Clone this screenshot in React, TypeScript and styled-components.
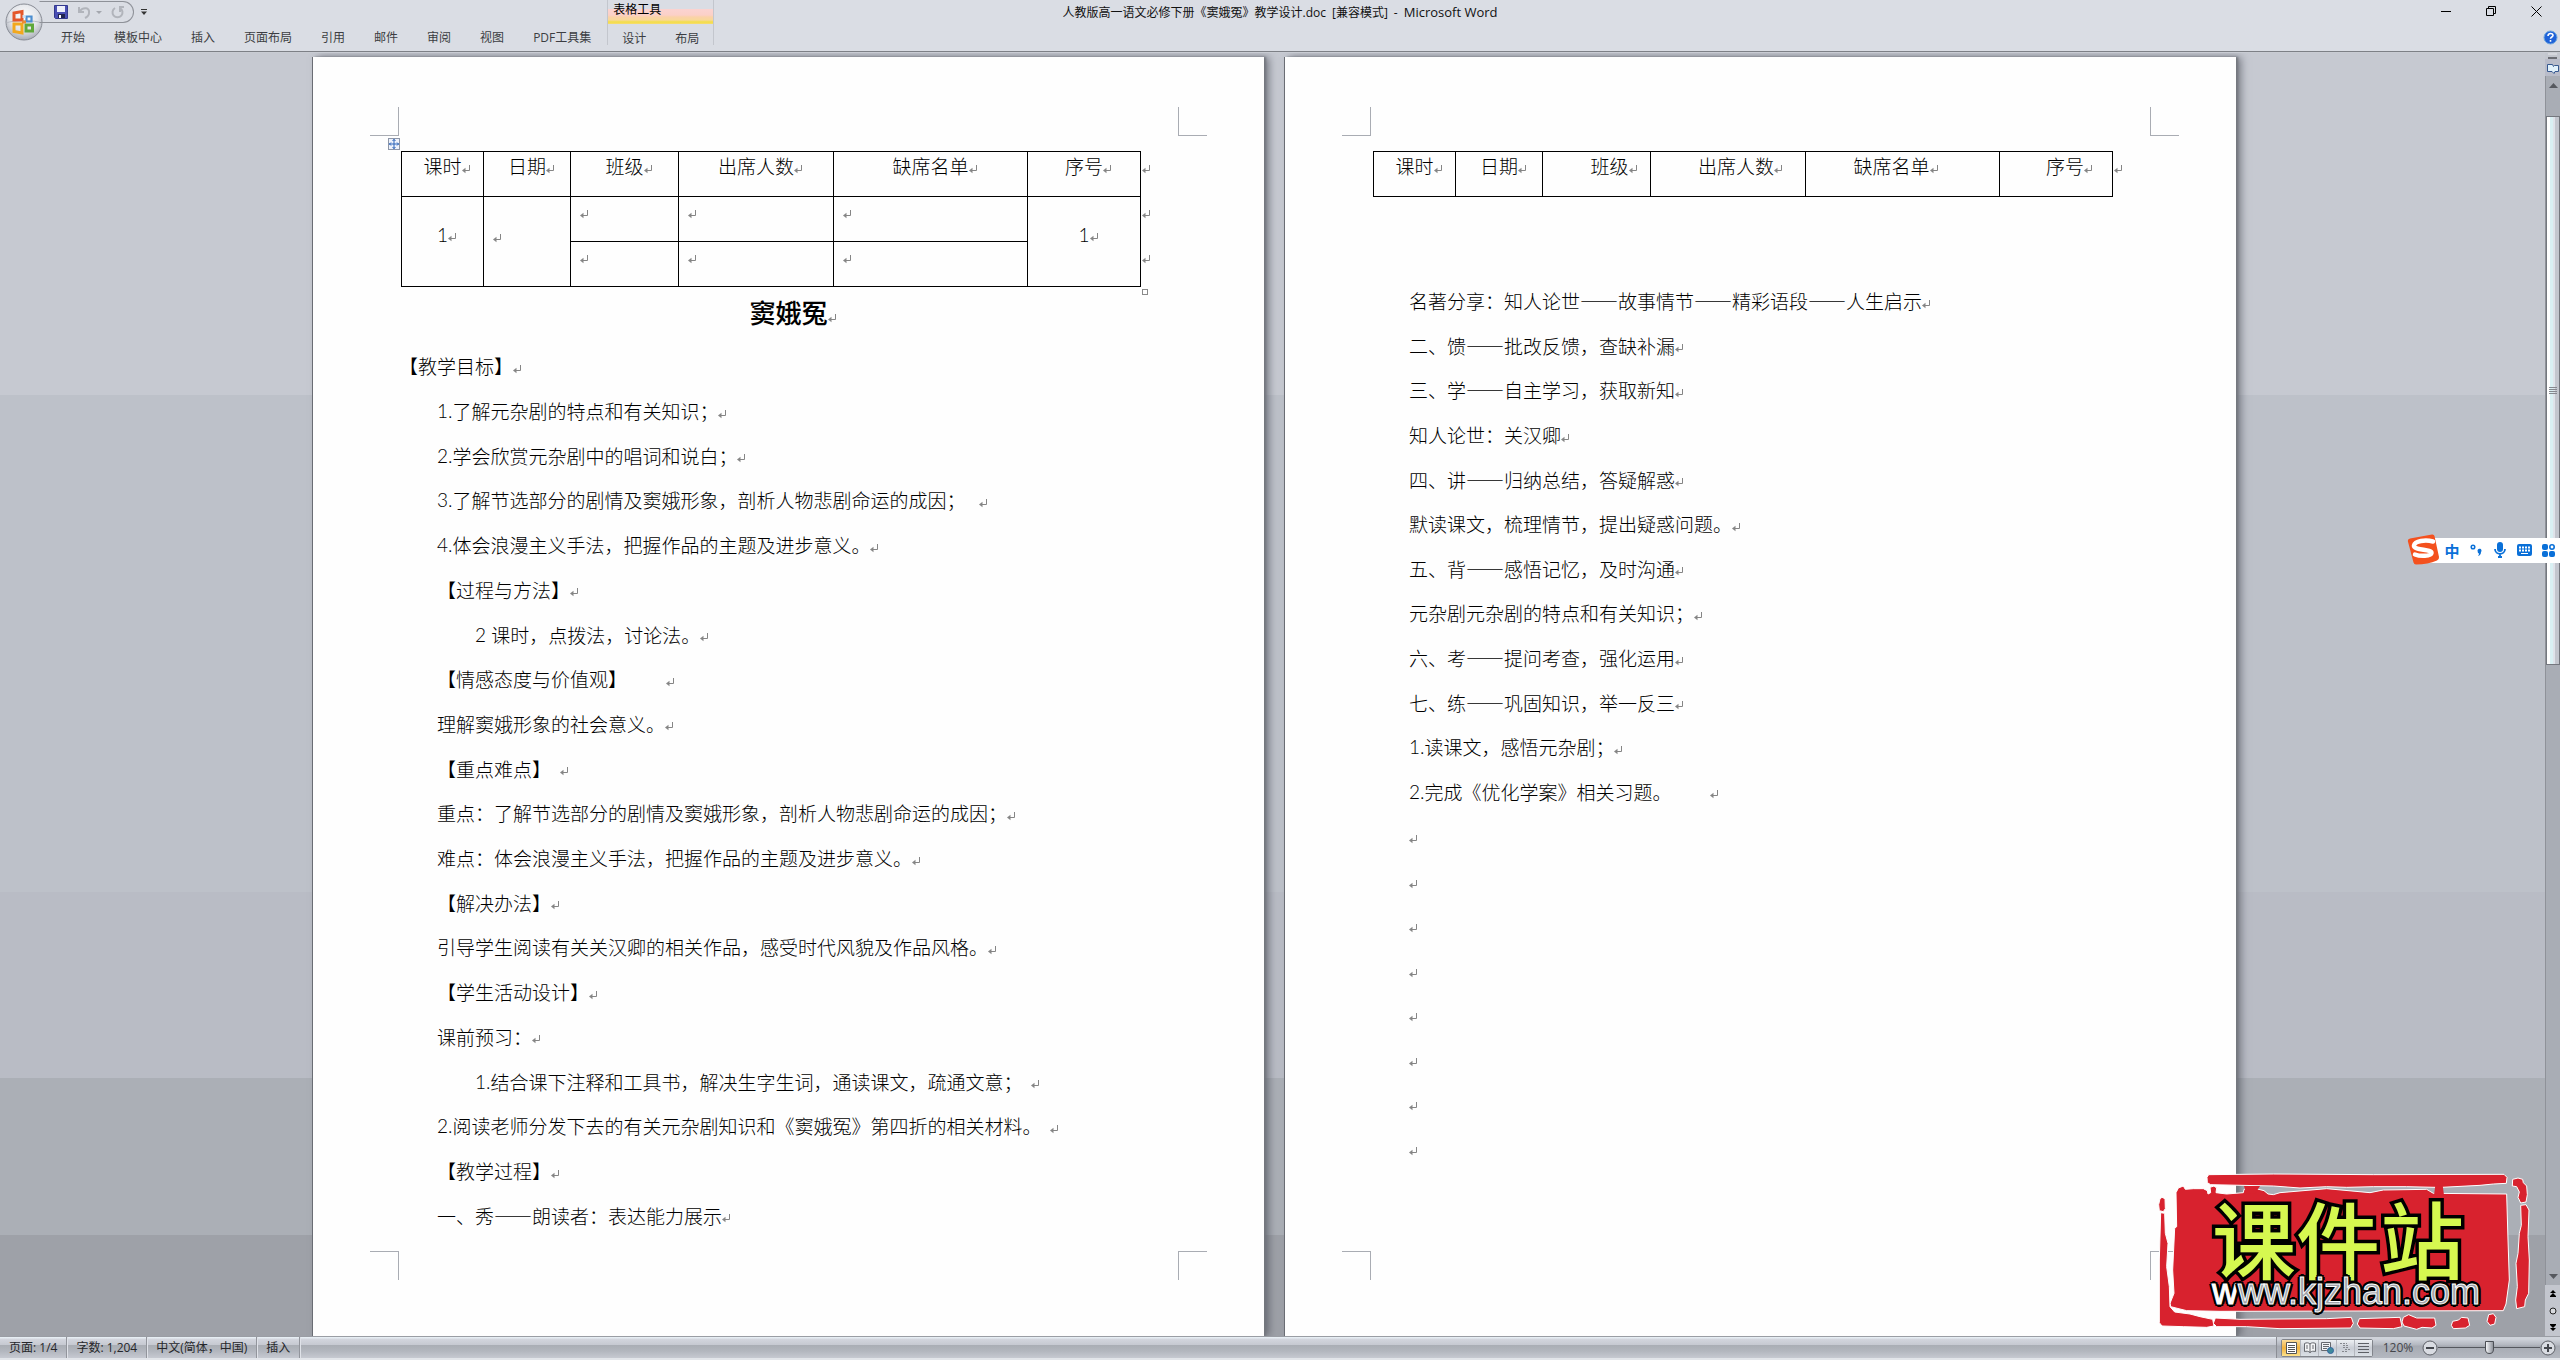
import React from "react";
import styled, { createGlobalStyle } from "styled-components";

/* ---------- shared values ---------- */

const UI_FONT = `"Open Sans", "Noto Sans CJK SC", sans-serif`;
const DOC_FONT = `"Noto Sans CJK SC", "Liberation Sans", sans-serif`;

const GlobalStyle = createGlobalStyle`
  html, body { margin: 0; padding: 0; }
  *, *::before, *::after { box-sizing: border-box; }
  button { font: inherit; color: inherit; border: 0; padding: 0; background: none; }
`;

const Shell = styled.div`
  position: relative;
  display: flex;
  flex-direction: column;
  min-height: 100vh;
  overflow: hidden;
  background: #c6c9d1;
  font-family: ${UI_FONT};
  font-size: 12px;
  color: #3c3d42;
`;

/* ---------- ribbon header ---------- */

const Header = styled.header`
  display: flex;
  height: 53px;
  background: #dadde4;
  border-bottom: 1px solid #c9ccd3;
  box-shadow: inset 0 -1px 0 #7d8086;
`;

const OfficeButton = styled.button`
  flex: none;
  width: 38px;
  height: 38px;
  margin: 3px 0 0 5px;
  svg { display: block; }
`;

const HeaderLeft = styled.div`
  flex: 1 1 0;
  display: flex;
`;

const HeaderColumn = styled.div`
  display: flex;
  flex-direction: column;
`;

const QuickRow = styled.div`
  display: flex;
  height: 25px;
`;

const QuickAccess = styled.div`
  display: flex;
  align-items: center;
  height: 22px;
  width: 95px;
  margin-top: 1px;
  margin-left: -4px;
  padding-left: 14px;
  gap: 9px;
  border: 1px solid #8e9198;
  border-left-color: transparent;
  border-radius: 0 11px 11px 0;
  svg { display: block; }
`;

const MoreButton = styled.button`
  width: 20px;
  height: 24px;
  svg { display: block; margin: auto; }
`;

const TabRow = styled.nav`
  display: flex;
  gap: 1px;
  height: 28px;
  padding-left: 4px;
`;

const Tab = styled.button`
  padding: 0 14px;
  line-height: 28px;
  white-space: nowrap;
`;

const ToolGroup = styled.div`
  display: flex;
  flex-direction: column;
  height: 45px;
  margin-left: 2px;
  border: solid #c3c6cd;
  border-width: 0 1px;
`;

const ToolTitle = styled.div`
  flex: none;
  height: 25px;
  padding-left: 5px;
  line-height: 20px;
  color: #000;
  background: linear-gradient(
    transparent 9px, #fbd3d1 9px, #fbd0c8 15px, #fad2a8 17px, #f8d89a 20px, #f3de45 22px, #f6dc74 24px, transparent 24px
  );
`;

const ToolTabs = styled.div`
  display: flex;
  gap: 1px;
`;

const WindowTitle = styled.h1`
  display: flex;
  gap: 6px;
  margin: 0;
  font-size: 12px;
  font-weight: 400;
  line-height: 25px;
  color: #111;
  white-space: nowrap;
`;

const ProductName = styled.span`
  font-size: 13px;
`;

const HeaderRight = styled.div`
  flex: 1 1 0;
  display: flex;
  flex-direction: column;
  align-items: flex-end;
`;

const WindowButtons = styled.div`
  display: flex;
  gap: 34px;
  height: 22px;
  padding-right: 18px;
  align-items: center;
`;

const PlainButton = styled.button`
  svg { display: block; }
`;

const HelpButton = styled(PlainButton)`
  margin: 8px 2px 0 0;
`;

/* ---------- workspace ---------- */

const Workspace = styled.div`
  flex: 1;
  display: flex;
  background: linear-gradient(
    #c6c9d1 342px, #bdc1c9 342px, #bdc1c9 839px, #b9bcc5 839px, #b9bcc5 1025px,
    #abafb6 1025px, #abafb6 1182px, #9ea1a8 1182px
  );
`;

const Canvas = styled.main`
  flex: 1;
  display: flex;
  justify-content: center;
  gap: 21px;
  padding: 4px 0 0 4px;
  overflow: hidden;
`;

const Page = styled.article<{ $bottom: number }>`
  position: relative;
  flex: none;
  display: flex;
  flex-direction: column;
  width: 951px;
  padding: 94px 86px ${(p) => p.$bottom}px;
  background: #fefefe;
  box-shadow: -1px 0 0 #6a6d74, 2px 0 2px #74777e, 5px 0 8px rgba(70, 74, 84, 0.6);
  font-family: ${DOC_FONT};
  font-size: 19px;
  font-weight: 300;
  color: #000;
  text-spacing-trim: space-all;
`;

const Corner = styled.span<{ $v: "top" | "bottom"; $h: "left" | "right" }>`
  position: absolute;
  ${(p) => (p.$v === "top" ? "top: 50px;" : "bottom: 56px;")}
  ${(p) => p.$h}: 57px;
  width: 29px;
  height: 29px;
  border: 0 solid #a9acb3;
  ${(p) => (p.$v === "top" ? "border-bottom-width: 1px;" : "border-top-width: 1px;")}
  ${(p) => (p.$h === "left" ? "border-right-width: 1px;" : "border-left-width: 1px;")}
`;

const MoveHandle = styled.button`
  position: absolute;
  top: 81px;
  left: 75px;
  width: 12px;
  height: 12px;
  border: 1px solid #8d96a8;
  background: #eef2fb;
  svg { display: block; }
`;

const SizeHandle = styled.span`
  position: absolute;
  top: 232px;
  left: 829px;
  width: 6px;
  height: 6px;
  border: 1px solid #8a8a8a;
`;

const Table = styled.table`
  align-self: flex-start;
  table-layout: fixed;
  width: 752px;
  margin-left: 2px;
  border-collapse: collapse;
  line-height: 28px;
`;

const Cell = styled.td<{ $before?: number; $after?: number; $align?: string; $middle?: boolean }>`
  height: 45px;
  padding: 0 ${(p) => p.$after ?? 0}px ${(p) => (p.$middle ? 14 : 0)}px ${(p) => p.$before ?? 0}px;
  border: 1px solid #000;
  font-weight: 300;
  text-align: ${(p) => p.$align ?? "center"};
  vertical-align: ${(p) => (p.$middle ? "middle" : "top")};
  white-space: nowrap;
`;

const RowEnd = styled.td`
  padding: 0 0 0 1px;
  border: 0;
  vertical-align: top;
`;

const DocTitle = styled.h2`
  margin: 0 0 7px;
  line-height: 50px;
  font-size: 26px;
  font-weight: 500;
  text-align: center;
`;

const Lines = styled.div<{ $gap: number }>`
  flex: 1;
  display: flex;
  flex-direction: column;
  margin-top: ${(p) => p.$gap}px;
`;

const Line = styled.p<{ $indent: number }>`
  flex: 1 0 0;
  display: flex;
  align-items: center;
  margin: 0;
  padding-left: ${(p) => p.$indent * 38}px;
  line-height: 28px;
  white-space: pre;
`;

const Latin = styled.span`
  font-family: Lato, "Liberation Sans", sans-serif;
  font-weight: 300;
`;

const MarkSvg = styled.svg<{ $gap: number; $hang: boolean }>`
  flex: none;
  width: 8px;
  height: 9px;
  margin-left: ${(p) => p.$gap}px;
  margin-right: ${(p) => (p.$hang ? -8 : 0)}px;
  margin-top: 6px;
`;

const Mark = ({ gap = 0, hang = false }: { gap?: number; hang?: boolean }) => (
  <MarkSvg viewBox="0 0 8 9" $gap={gap} $hang={hang} aria-hidden="true">
    <path d="M7.5 0v5.5H2" fill="none" stroke="#858585" />
    <path d="M0 5.5 3.5 2.8v5.4z" fill="#858585" />
  </MarkSvg>
);

/* ---------- scroll bar ---------- */

const ScrollColumn = styled.aside`
  flex: none;
  display: flex;
  flex-direction: column;
  width: 15px;
  background: #c3c6ce;
  button { display: flex; align-items: center; justify-content: center; }
`;

const SplitBox = styled.div`
  height: 6px;
  margin: 0 3px;
  border-top: 2px solid #d5d7dd;
  border-bottom: 2px solid #6b6d74;
`;

const RulerButton = styled.button`
  height: 17px;
  background: #b9bcc9;
`;

const Track = styled.div`
  flex: 1;
  display: flex;
  flex-direction: column;
  background: #a9adb5;
  border-left: 1px solid #8f9299;
`;

const ArrowButton = styled.button<{ $tall?: boolean }>`
  height: ${(p) => (p.$tall ? 40 : 18)}px;
  ${(p) => p.$tall && "padding-bottom: 22px;"}
`;

const Thumb = styled.div`
  flex: 549 1 0;
  display: flex;
  flex-direction: column;
  justify-content: center;
  align-items: center;
  gap: 1px;
  border: 1px solid #74777e;
  background: linear-gradient(90deg, #fff 3px, #d9f0f3 3px 6px, #dfe3ea 6px 8px, #c3c6ce 8px);
`;

const Grip = styled.span`
  width: 8px;
  height: 1px;
  background: #85888f;
`;

const TrackRest = styled.div`
  flex: 604 1 0;
`;

const BrowseButtons = styled.div`
  display: flex;
  flex-direction: column;
  height: 51px;
  button { flex: 1; }
`;

/* ---------- status bar ---------- */

const StatusBar = styled.footer`
  display: flex;
  height: 24px;
  border-top: 1px solid #9a9da4;
  border-bottom: 2px solid #e2e5ea;
  background: linear-gradient(#e6edf3 1px, #d3d6de 2px, #c6c9d1 8px, #a9adb4 8px, #b2b6be 14px, #c6c9d1 21px);
`;

const StatusItem = styled.button`
  padding: 0 9px;
  line-height: 20px;
  white-space: nowrap;
  color: #26272b;
  border-right: 1px solid #92959c;
  box-shadow: 1px 0 0 #dfe2e8;
`;

const StatusRight = styled.div`
  display: flex;
  align-items: center;
  margin-left: auto;
  padding: 0 4px;
  border-left: 1px solid #8b8e95;
  background: linear-gradient(#cfd3da 2px, #b3b7bf 8px, #a6aab2 9px, #b4b8c0 21px);
`;

const ViewGroup = styled.div`
  display: flex;
  height: 18px;
  border: 1px solid #82858c;
  border-radius: 2px;
  background: #e3e8ee;
`;

const ViewButton = styled.button<{ $on?: boolean }>`
  display: flex;
  align-items: center;
  justify-content: center;
  width: 18px;
  background: ${(p) => (p.$on ? "linear-gradient(#fbdc9a, #f3b23c 50%, #fce28e)" : "linear-gradient(#eef1f4, #c9cdd5 50%, #dbe0e6)")};
  & + & { border-left: 1px solid #b4b7be; }
`;

const ZoomText = styled.button`
  width: 32px;
  margin: 0 8px 0 9px;
  color: #45464b;
`;

const ZoomSlider = styled.input`
  appearance: none;
  width: 102px;
  height: 14px;
  margin: 0;
  background: linear-gradient(#55585e, #55585e) center / 100% 1px no-repeat;
  &::-webkit-slider-thumb {
    appearance: none;
    width: 9px;
    height: 13px;
    background: linear-gradient(90deg, #f2f4f7, #8f939b);
    border: 1px solid #4c4f55;
    border-radius: 1px 1px 5px 5px;
  }
`;

/* ---------- floating items ---------- */

const ImeBar = styled.div`
  position: absolute;
  top: 534px;
  right: 0;
  display: flex;
  align-items: center;
  height: 32px;
  background: linear-gradient(transparent 4px, #fff 4px, #fff 29px, transparent 29px) 14px 0 no-repeat;
  color: #0a70d8;
  button { width: 24px; height: 32px; display: flex; align-items: center; justify-content: center; }
`;

const ImeMode = styled.button`
  font-size: 15px;
  font-weight: 700;
`;

const ImeLogo = styled.svg`
  width: 33px;
  height: 32px;
`;

const Stamp = styled.div`
  position: absolute;
  right: 0;
  bottom: 0;
  width: 420px;
  height: 200px;
  pointer-events: none;
`;

const StampArt = styled.svg`
  position: absolute;
  inset: 0;
  width: 420px;
  height: 200px;
`;

const StampText = styled.div`
  position: relative;
  display: flex;
  flex-direction: column;
  padding: 28px 0 0 72px;
  white-space: nowrap;
`;

const StampName = styled.strong`
  height: 84px;
  line-height: 98px;
  font-family: "Noto Sans CJK SC", sans-serif;
  font-size: 84px;
  font-weight: 500;
  color: #d6f850;
  -webkit-text-stroke: 7px #000;
  paint-order: stroke fill;
`;

const StampUrl = styled.span`
  line-height: 40px;
  font-family: "Liberation Sans", sans-serif;
  font-size: 36px;
  color: #9ea1a8;
  -webkit-text-stroke: 1px #fff;
  text-shadow: 3px 0 #000, -3px 0 #000, 0 3px #000, 0 -3px #000, 2px 2px #000, -2px 2px #000,
    2px -2px #000, -2px -2px #000;
  b { font-weight: 400; color: #fff; }
`;

/* ---------- data ---------- */

type Row = { t?: string; n?: string; indent?: number; gap?: number };

const pageOne: Row[] = [
  { t: "【教学目标】", indent: 0 },
  { n: "1.", t: "了解元杂剧的特点和有关知识；" },
  { n: "2.", t: "学会欣赏元杂剧中的唱词和说白；" },
  { n: "3.", t: "了解节选部分的剧情及窦娥形象，剖析人物悲剧命运的成因；", gap: 14 },
  { n: "4.", t: "体会浪漫主义手法，把握作品的主题及进步意义。" },
  { t: "【过程与方法】" },
  { n: "2 ", t: "课时，点拨法，讨论法。", indent: 2 },
  { t: "【情感态度与价值观】", gap: 39 },
  { t: "理解窦娥形象的社会意义。" },
  { t: "【重点难点】", gap: 9 },
  { t: "重点：了解节选部分的剧情及窦娥形象，剖析人物悲剧命运的成因；" },
  { t: "难点：体会浪漫主义手法，把握作品的主题及进步意义。" },
  { t: "【解决办法】" },
  { t: "引导学生阅读有关关汉卿的相关作品，感受时代风貌及作品风格。" },
  { t: "【学生活动设计】" },
  { t: "课前预习：" },
  { n: "1.", t: "结合课下注释和工具书，解决生字生词，通读课文，疏通文意；", indent: 2, gap: 9 },
  { n: "2.", t: "阅读老师分发下去的有关元杂剧知识和《窦娥冤》第四折的相关材料。", gap: 9 },
  { t: "【教学过程】" },
  { t: "一、秀——朗读者：表达能力展示" },
];

const pageTwo: Row[] = [
  { t: "名著分享：知人论世——故事情节——精彩语段——人生启示" },
  { t: "二、馈——批改反馈，查缺补漏" },
  { t: "三、学——自主学习，获取新知" },
  { t: "知人论世：关汉卿" },
  { t: "四、讲——归纳总结，答疑解惑" },
  { t: "默读课文，梳理情节，提出疑惑问题。" },
  { t: "五、背——感悟记忆，及时沟通" },
  { t: "元杂剧元杂剧的特点和有关知识；" },
  { t: "六、考——提问考查，强化运用" },
  { t: "七、练——巩固知识，举一反三" },
  { n: "1.", t: "读课文，感悟元杂剧；" },
  { n: "2.", t: "完成《优化学案》相关习题。", gap: 39 },
  ...Array.from({ length: 8 }, () => ({})),
];

const heads = ["课时", "日期", "班级", "出席人数", "缺席名单", "序号"];
const headShift: [number, number][] = [[0, 0], [0, 0], [26, 0], [16, 0], [0, 22], [18, 0]];
const columns = [82, 87, 108, 155, 194, 113, 13];
const tabs = ["开始", "模板中心", "插入", "页面布局", "引用", "邮件", "审阅", "视图", "PDF工具集"];

/* ---------- pieces ---------- */

const Text = ({ rows, gap }: { rows: Row[]; gap: number }) => (
  <Lines $gap={gap}>
    {rows.map((r, i) => (
      <Line key={i} $indent={r.indent ?? 1}>
        {r.n && <Latin>{r.n}</Latin>}
        {r.t && <span>{r.t}</span>}
        <Mark gap={r.gap} />
      </Line>
    ))}
  </Lines>
);

const Corners = () => (
  <>
    <Corner $v="top" $h="left" />
    <Corner $v="top" $h="right" />
    <Corner $v="bottom" $h="left" />
    <Corner $v="bottom" $h="right" />
  </>
);

const Cols = () => (
  <colgroup>
    {columns.map((w, i) => (
      <col key={i} width={w} />
    ))}
  </colgroup>
);

const HeadRow = ({ shifted }: { shifted?: boolean }) => (
  <tr>
    {heads.map((h, i) => (
      <Cell
        as="th"
        scope="col"
        key={h}
        $before={shifted ? headShift[i][0] : 0}
        $after={shifted ? headShift[i][1] : 0}
      >
        {h}
        <Mark hang />
      </Cell>
    ))}
    <RowEnd>
      <Mark />
    </RowEnd>
  </tr>
);

const EmptyCells = () => (
  <>
    {[0, 1, 2].map((i) => (
      <Cell key={i} $align="left" $before={9}>
        <Mark />
      </Cell>
    ))}
  </>
);

const RollTable = () => (
  <Table>
    <Cols />
    <thead>
      <HeadRow />
    </thead>
    <tbody>
      <tr>
        <Cell rowSpan={2} $middle>
          <Latin>1</Latin>
          <Mark hang />
        </Cell>
        <Cell rowSpan={2} $middle $align="left" $before={9}>
          <Mark />
        </Cell>
        <EmptyCells />
        <Cell rowSpan={2} $middle>
          <Latin>1</Latin>
          <Mark hang />
        </Cell>
        <RowEnd>
          <Mark />
        </RowEnd>
      </tr>
      <tr>
        <EmptyCells />
        <RowEnd>
          <Mark />
        </RowEnd>
      </tr>
    </tbody>
  </Table>
);

const OfficeLogo = () => (
  <svg width="38" height="38" viewBox="0 0 38 38">
    <defs>
      <radialGradient id="orb" cx="50%" cy="35%" r="65%">
        <stop offset="0" stopColor="#fff" />
        <stop offset="0.6" stopColor="#e2e4e9" />
        <stop offset="1" stopColor="#a9adb6" />
      </radialGradient>
    </defs>
    <circle cx="19" cy="19" r="18" fill="url(#orb)" stroke="#888c95" />
    <path d="M1.500 20c5-3 30-3 35 0" stroke="#b9bcc4" fill="none" />
    <g fill="none" strokeWidth="3">
      <path d="M9 10l8-1.500v8.500h-8z" stroke="#e4572b" />
      <path d="M21.500 13.500h5v5h-5z" stroke="#4c8ed0" strokeWidth="2.200" />
      <path d="M9 21h8v9l-8-1.500z" stroke="#f2a81d" />
      <path d="M21 22h6.500v6h-6.500z" stroke="#5fa83b" />
    </g>
    <path d="M17.500 12h3v3h-3z" fill="#cfe0f4" />
    <path d="M17 17.500h4v3h-4z" fill="#e98a35" />
  </svg>
);

const StampShapes = () => (
  <StampArt viewBox="0 0 1260 600" aria-hidden="true">
    <g fill="#d8222e" stroke="#fff" strokeWidth="3" strokeLinejoin="round">
      <path d="M108 98 115 84 130 78 136 88 160 86 190 86 202 92 204 102 212 98 210 82 222 78 230 84 228 98 260 102 310 98 312 88 340 84 372 92 384 102 400 104 420 98 560 86 690 98 730 90 860 88 880 100 1100 102 1104 240 1108 360 1098 432 1090 452 240 454 140 452 92 440 90 430 102 400 98 330 104 205 110 200Z" />
      <path d="M206 44 400 42 700 44 1092 43 1101 52 1099 70 1060 72 1020 76 905 82 886 82 800 80 700 80 620 82 560 80 480 84 400 78 212 74 202 68 201 52Z" />
      <path d="M60 116 66 112 75 116 76 146 70 155 58 152 56 134Z" />
      <path d="M62 158 74 160 76 220 84 250 80 320 88 380 90 440 104 456 150 462 180 470 218 478 222 498 200 502 130 500 66 498 58 488 58 300Z" />
      <path d="M226 474 300 478 560 476 634 472 640 490 632 504 420 506 320 500 230 500 220 490Z" />
      <path d="M658 476 780 472 786 500 760 506 660 504 652 492Z" />
      <path d="M790 472 806 464 830 474 884 474 888 496 876 504 846 502 830 508 792 498 786 486Z" />
      <path d="M938 484 956 480 964 472 984 474 989 496 976 504 940 506 934 496Z" />
      <path d="M1046 464 1060 461 1068 472 1064 492 1050 496 1041 484Z" />
      <path d="M1118 58 1134 54 1148 58 1150 68 1160 78 1162 104 1158 126 1142 129 1134 112 1138 96 1130 80 1117 78Z" />
      <path d="M1142 136 1158 134 1167 150 1164 230 1168 300 1166 400 1156 420 1154 440 1130 446 1127 420 1132 380 1128 310 1134 280 1138 220 1144 196Z" />
    </g>
    <g fill="#d8222e">
      <path d="M312 78h48l-14 22h-28zM886 76h22l4 30h-30z" />
    </g>
  </StampArt>
);

export default function App() {
  return (
    <Shell lang="zh-CN">
      <GlobalStyle />
      <Header>
        <HeaderLeft>
          <OfficeButton aria-label="Office">
            <OfficeLogo />
          </OfficeButton>
          <HeaderColumn>
            <QuickRow>
              <QuickAccess>
                <PlainButton aria-label="保存">
                  <svg width="14" height="14" viewBox="0 0 14 14">
                    <path d="M.5.500h13v13h-12l-1-1z" fill="#4a4fb4" stroke="#33388e" />
                    <path d="M3 1h8v6H3z" fill="#eef0fb" />
                    <path d="M4 9h7v4H4z" fill="#20244f" />
                    <path d="M5 10h2v3H5z" fill="#fff" />
                  </svg>
                </PlainButton>
                <PlainButton aria-label="撤消">
                  <svg width="25" height="14" viewBox="0 0 25 14">
                    <path d="M2 2v5h5M3 6c3-4 10-4 9 2 0 2-2 4-4 5" fill="none" stroke="#b1b4bb" strokeWidth="2" />
                    <path d="M19 6h6l-3 3z" fill="#a4a7ae" />
                  </svg>
                </PlainButton>
                <PlainButton aria-label="恢复">
                  <svg width="13" height="14" viewBox="0 0 13 14">
                    <path d="M4 3a5 5 0 1 0 5 0M9 7V2h4" fill="none" stroke="#b1b4bb" strokeWidth="2" />
                  </svg>
                </PlainButton>
              </QuickAccess>
              <MoreButton aria-label="自定义快速访问工具栏">
                <svg width="6" height="6" viewBox="0 0 6 6">
                  <path d="M0 0h6v1H0zM0 2.500h6L3 6z" fill="#333" />
                </svg>
              </MoreButton>
            </QuickRow>
            <TabRow>
              {tabs.map((t) => (
                <Tab key={t}>{t}</Tab>
              ))}
            </TabRow>
          </HeaderColumn>
          <ToolGroup>
            <ToolTitle>表格工具</ToolTitle>
            <ToolTabs>
              <Tab>设计</Tab>
              <Tab>布局</Tab>
            </ToolTabs>
          </ToolGroup>
        </HeaderLeft>
        <WindowTitle>
          <span>人教版高一语文必修下册《窦娥冤》教学设计.doc</span>
          <span>[兼容模式]</span>
          <span>-</span>
          <ProductName>Microsoft Word</ProductName>
        </WindowTitle>
        <HeaderRight>
          <WindowButtons>
            <PlainButton aria-label="最小化">
              <svg width="11" height="11" viewBox="0 0 11 11">
                <path d="M0 5.500h10" stroke="#000" />
              </svg>
            </PlainButton>
            <PlainButton aria-label="还原">
              <svg width="11" height="11" viewBox="0 0 11 11">
                <path d="M.5 2.500h7v7h-7zM2.500 2.500v-2h7v7h-2" fill="none" stroke="#000" />
              </svg>
            </PlainButton>
            <PlainButton aria-label="关闭">
              <svg width="11" height="11" viewBox="0 0 11 11">
                <path d="M.5.500l10 10M10.500.500l-10 10" stroke="#000" />
              </svg>
            </PlainButton>
          </WindowButtons>
          <HelpButton aria-label="帮助">
            <svg width="15" height="15" viewBox="0 0 15 15">
              <circle cx="7.500" cy="7.500" r="6.500" fill="#1f62d8" stroke="#6fa6dd" />
              <path d="M5 6c0-3.300 5-3.300 5-.5 0 1.500-2.500 1.600-2.500 3.300M7.500 10v1.800" fill="none" stroke="#fff" strokeWidth="1.600" />
            </svg>
          </HelpButton>
        </HeaderRight>
      </Header>

      <Workspace>
        <Canvas>
          <Page $bottom={98}>
            <Corners />
            <MoveHandle aria-label="移动表格">
              <svg width="10" height="10" viewBox="0 0 10 10">
                <path d="M5 0v10M0 5h10M3.500 2 5 .5 6.500 2M3.500 8 5 9.500 6.500 8M2 3.500.5 5 2 6.500M8 3.500 9.500 5 8 6.500" fill="none" stroke="#2a62b8" />
              </svg>
            </MoveHandle>
            <RollTable />
            <SizeHandle />
            <DocTitle>
              窦娥冤
              <Mark hang />
            </DocTitle>
            <Text rows={pageOne} gap={0} />
          </Page>
          <Page $bottom={165}>
            <Corners />
            <Table>
              <Cols />
              <thead>
                <HeadRow shifted />
              </thead>
            </Table>
            <Text rows={pageTwo} gap={82} />
          </Page>
        </Canvas>
        <ScrollColumn>
          <SplitBox />
          <RulerButton aria-label="标尺">
            <svg width="12" height="12" viewBox="0 0 12 12">
              <path d="M.5 2.500h5l1 2 1-1h4v6H8l-1 2-2-2H.500z" fill="#e2f1fa" stroke="#36588f" />
            </svg>
          </RulerButton>
          <Track>
            <ArrowButton $tall aria-label="向上滚动">
              <svg width="9" height="5" viewBox="0 0 9 5">
                <path d="M4.500 0 9 5H0z" fill="#55585e" />
              </svg>
            </ArrowButton>
            <Thumb>
              {[0, 1, 2, 3].map((i) => (
                <Grip key={i} />
              ))}
            </Thumb>
            <TrackRest />
            <ArrowButton aria-label="向下滚动">
              <svg width="9" height="5" viewBox="0 0 9 5">
                <path d="M0 0h9L4.500 5z" fill="#55585e" />
              </svg>
            </ArrowButton>
          </Track>
          <BrowseButtons>
            <PlainButton aria-label="前一页">
              <svg width="6" height="7" viewBox="0 0 6 7">
                <path d="M3 0 6 3H0zM3 3l3 3H0zM0 6h6v1H0z" fill="#000" />
              </svg>
            </PlainButton>
            <PlainButton aria-label="选择浏览对象">
              <svg width="8" height="8" viewBox="0 0 8 8">
                <circle cx="4" cy="4" r="3" fill="#d8dadf" stroke="#222" />
              </svg>
            </PlainButton>
            <PlainButton aria-label="下一页">
              <svg width="6" height="7" viewBox="0 0 6 7">
                <path d="M0 0h6v1H0zM0 1h6L3 4zM0 4h6L3 7z" fill="#000" />
              </svg>
            </PlainButton>
          </BrowseButtons>
        </ScrollColumn>
      </Workspace>

      <StatusBar>
        <StatusItem>页面: 1/4</StatusItem>
        <StatusItem>字数: 1,204</StatusItem>
        <StatusItem>中文(简体，中国)</StatusItem>
        <StatusItem>插入</StatusItem>
        <StatusRight>
          <ViewGroup>
            <ViewButton $on aria-label="页面视图">
              <svg width="11" height="12" viewBox="0 0 11 12">
                <path d="M.5.500h10v11H.500z" fill="#fff" stroke="#555" />
                <path d="M2 3.500h7M2 5.500h7M2 7.500h7M2 9.500h7" stroke="#555" />
              </svg>
            </ViewButton>
            <ViewButton aria-label="阅读版式">
              <svg width="12" height="12" viewBox="0 0 12 12">
                <path d="M.5 1.500c2-1 4-1 5.500.5 1.500-1.500 3.500-1.500 5.500-.5v8c-2-.5-4-.5-5.500 1-1.500-1.500-3.500-1.500-5.500-1zM6 2v9M2 4h2M2 6h2M8 4h2M8 6h2" fill="#f3f4f6" stroke="#66696f" />
              </svg>
            </ViewButton>
            <ViewButton aria-label="Web 版式">
              <svg width="13" height="12" viewBox="0 0 13 12">
                <path d="M.5.500h9v8h-9zM2 2.500h6M2 4.500h6M2 6.500h4" fill="#f3f4f6" stroke="#66696f" />
                <circle cx="9.500" cy="8.500" r="3" fill="#3f8a9c" stroke="#33639e" />
              </svg>
            </ViewButton>
            <ViewButton aria-label="大纲视图">
              <svg width="11" height="12" viewBox="0 0 11 12">
                <path d="M0 1.500h7M3 3.500h5M3 5.500h5M5 7.500h5M2 9.500h6" stroke="#85888e" strokeDasharray="2 1" />
              </svg>
            </ViewButton>
            <ViewButton aria-label="普通视图">
              <svg width="11" height="12" viewBox="0 0 11 12">
                <path d="M0 1.500h11M0 4.500h11M0 7.500h11M0 10.500h11" stroke="#5d6066" />
              </svg>
            </ViewButton>
          </ViewGroup>
          <ZoomText>120%</ZoomText>
          <PlainButton aria-label="缩小">
            <svg width="16" height="16" viewBox="0 0 16 16">
              <circle cx="8" cy="8" r="7" fill="#d9dce2" stroke="#5d6067" />
              <path d="M4 8h8" stroke="#44474d" strokeWidth="2" />
            </svg>
          </PlainButton>
          <ZoomSlider type="range" min={0} max={100} defaultValue={51} aria-label="显示比例" />
          <PlainButton aria-label="放大">
            <svg width="16" height="16" viewBox="0 0 16 16">
              <circle cx="8" cy="8" r="7" fill="#d9dce2" stroke="#5d6067" />
              <path d="M4 8h8M8 4v8" stroke="#44474d" strokeWidth="2" />
            </svg>
          </PlainButton>
        </StatusRight>
      </StatusBar>

      <ImeBar>
        <ImeLogo viewBox="0 0 33 32" aria-hidden="true">
          <path d="M3 4.500 25 .5q2-.3 2.500 1.500L32 23q.3 2.500-2 3.500-9 4-21 4-2 0-2.500-2L.8 7Q.500 5 3 4.500z" fill="#f4511e" />
          <path d="M26 7.500C18 5.500 8 7 7 11.500c-.6 5 18 3.500 17.500 7.500C24 22.500 13 22.500 8 20.500" fill="none" stroke="#fff" strokeWidth="4.500" strokeLinecap="round" />
        </ImeLogo>
        <ImeMode>中</ImeMode>
        <PlainButton aria-label="标点">
          <svg width="12" height="12" viewBox="0 0 12 12">
            <circle cx="3" cy="3" r="1.800" fill="none" stroke="currentColor" strokeWidth="1.500" />
            <path d="M7.500 6.500a2 2 0 1 1 3.500 1.500q0 3-3 4 1.200-1.500 1-2.500-1.500-.5-1.500-3z" fill="currentColor" />
          </svg>
        </PlainButton>
        <PlainButton aria-label="语音">
          <svg width="12" height="16" viewBox="0 0 12 16">
            <rect x="3" y="0" width="6" height="10" rx="3" fill="currentColor" />
            <path d="M1 7c0 6.500 10 6.500 10 0M4 15h4M6 12v3" fill="none" stroke="currentColor" strokeWidth="1.800" />
          </svg>
        </PlainButton>
        <PlainButton aria-label="软键盘">
          <svg width="15" height="12" viewBox="0 0 15 12">
            <rect width="15" height="12" rx="2" fill="currentColor" />
            <path d="M2 3.500h11M2 6.500h11" stroke="#fff" strokeWidth="2" strokeDasharray="2 1" />
            <path d="M4 9.500h7" stroke="#fff" />
          </svg>
        </PlainButton>
        <PlainButton aria-label="工具箱">
          <svg width="13" height="13" viewBox="0 0 13 13">
            <g fill="currentColor">
              <rect width="6" height="6" rx="2" />
              <rect y="7" width="6" height="6" rx="2" />
              <rect x="7" y="7" width="6" height="6" rx="2" />
            </g>
            <circle cx="10" cy="3" r="2.200" fill="none" stroke="currentColor" strokeWidth="1.600" />
          </svg>
        </PlainButton>
      </ImeBar>

      <Stamp>
        <StampShapes />
        <StampText>
          <StampName>课件站</StampName>
          <StampUrl>
            <b>w</b>ww.kjzhan.com
          </StampUrl>
        </StampText>
      </Stamp>
    </Shell>
  );
}
